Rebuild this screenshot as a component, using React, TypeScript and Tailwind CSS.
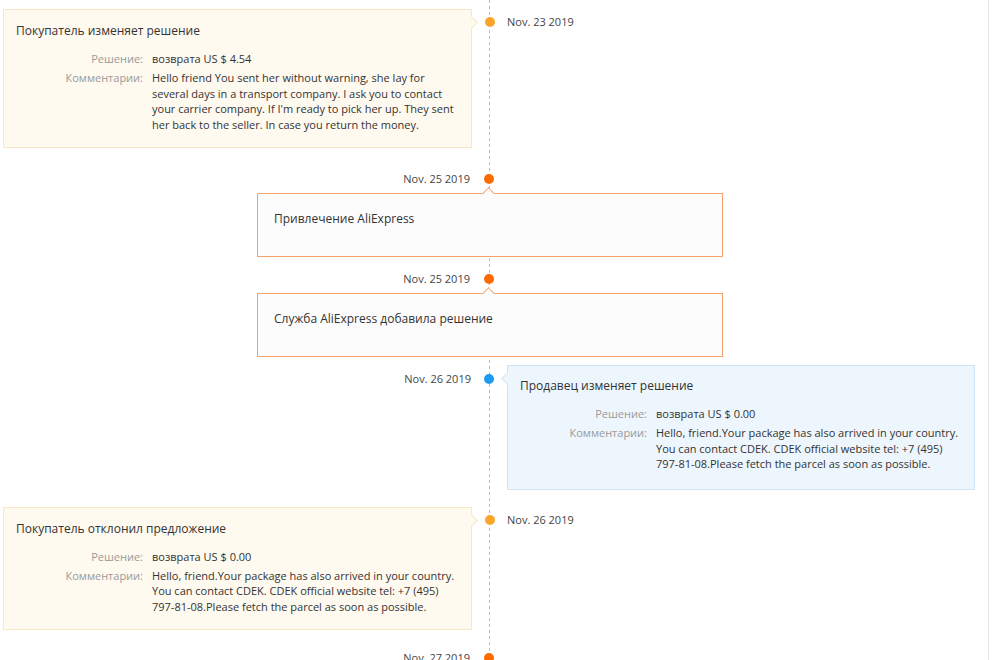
import React from "react";

const font = { fontFamily: '"Open Sans", "Noto Sans", Arial, sans-serif' };

function Dot({ color }: { color: string }) {
  return <div className={`w-[10px] h-[10px] rounded-full ${color}`} />;
}

function Details({ amount, lines }: { amount: string; lines: string[] }) {
  return (
    <div className="mt-[12px] text-[11px] leading-[15.5px]">
      <div className="flex">
        <div className="w-[136px] text-right text-[#999] pr-[9px] shrink-0">Решение:</div>
        <div className="text-[#333]">возврата US $ {amount}</div>
      </div>
      <div className="flex mt-[3.5px]">
        <div className="w-[136px] text-right text-[#999] pr-[9px] shrink-0">Комментарии:</div>
        <div className="text-[#333]">
          {lines.map((l, i) => (
            <div key={i} className="whitespace-nowrap">{l}</div>
          ))}
        </div>
      </div>
    </div>
  );
}

function LeftCard({
  title,
  amount,
  lines,
  date,
  dotColor,
  mt,
}: {
  title: string;
  amount: string;
  lines: string[];
  date: string;
  dotColor: string;
  mt: string;
}) {
  return (
    <div className={`flex items-start ${mt}`}>
      <div className="ml-[3px] w-[469px] relative bg-[#fffaf0] border border-[#f8e6c6] pl-[12px] pt-[13px] pb-[15px] shrink-0">
        <div className="text-[12px] leading-[16px] text-[#333]">{title}</div>
        <Details amount={amount} lines={lines} />
        <div className="absolute right-[-5px] top-[8px] w-[9px] h-[9px] rotate-45 bg-[#fffaf0] border-t border-r border-[#f8e6c6]" />
      </div>
      <div className="w-[35px] flex justify-center pt-[8px] shrink-0">
        <Dot color={dotColor} />
      </div>
      <div className="pt-[5px] text-[11px] leading-[16px] text-[#444]">{date}</div>
    </div>
  );
}

function CenterItem({ date, text, mt }: { date: string; text: string; mt: string }) {
  return (
    <div className={mt}>
      <div className="flex items-center h-[20px]">
        <div className="w-[471px] text-right text-[11px] text-[#444] pr-[1px]">{date}</div>
        <div className="w-[36px] flex justify-center">
          <Dot color="bg-[#ff6a00]" />
        </div>
      </div>
      <div className="ml-[257px] mt-[4px] w-[466px] h-[64px] relative bg-[#fcfcfc] border border-[#f3a26c] pl-[16px] pt-[17px]">
        <div className="text-[12px] leading-[16px] text-[#333]">{text}</div>
        <div className="absolute left-[226px] top-[-5px] w-[9px] h-[9px] rotate-45 bg-[#fcfcfc] border-t border-l border-[#f3a26c]" />
      </div>
    </div>
  );
}

export default function App() {
  return (
    <div style={font} className="w-[1000px] h-[660px] bg-white overflow-hidden">
      <div className="relative w-[989px] h-[660px] border-r border-[#e6e6e6]">
        <div className="absolute left-[489px] top-0 bottom-0 w-[1px] bg-[repeating-linear-gradient(to_bottom,#bdbdbd_0_3px,transparent_3px_6px)]" />
        <div className="relative flex flex-col">
          <LeftCard
            mt="mt-[9px]"
            title="Покупатель изменяет решение"
            amount="4.54"
            date="Nov. 23 2019"
            dotColor="bg-[#f9a52b]"
            lines={[
              "Hello friend You sent her without warning, she lay for",
              "several days in a transport company. I ask you to contact",
              "your carrier company. If I'm ready to pick her up. They sent",
              "her back to the seller. In case you return the money.",
            ]}
          />
          <CenterItem mt="mt-[21px]" date="Nov. 25 2019" text="Привлечение AliExpress" />
          <CenterItem mt="mt-[12px]" date="Nov. 25 2019" text="Служба AliExpress добавила решение" />

          <div className="flex items-start mt-[8px]">
            <div className="w-[471px] text-right text-[11px] leading-[16px] text-[#444] pt-[6px] shrink-0">Nov. 26 2019</div>
            <div className="w-[36px] flex justify-center pt-[9px] shrink-0">
              <Dot color="bg-[#1e9bf0]" />
            </div>
            <div className="w-[468px] relative bg-[#eef6fd] border border-[#cfe5f6] pl-[12px] pt-[12px] pb-[17px] shrink-0">
              <div className="text-[12px] leading-[16px] text-[#333]">Продавец изменяет решение</div>
              <Details
                amount="0.00"
                lines={[
                  "Hello, friend.Your package has also arrived in your country.",
                  "You can contact CDEK. CDEK official website tel: +7 (495)",
                  "797-81-08.Please fetch the parcel as soon as possible.",
                ]}
              />
              <div className="absolute left-[-5px] top-[8px] w-[9px] h-[9px] rotate-45 bg-[#eef6fd] border-b border-l border-[#cfe5f6]" />
            </div>
          </div>

          <LeftCard
            mt="mt-[17px]"
            title="Покупатель отклонил предложение"
            amount="0.00"
            date="Nov. 26 2019"
            dotColor="bg-[#f9a52b]"
            lines={[
              "Hello, friend.Your package has also arrived in your country.",
              "You can contact CDEK. CDEK official website tel: +7 (495)",
              "797-81-08.Please fetch the parcel as soon as possible.",
            ]}
          />

          <div className="flex items-center h-[20px] mt-[18px]">
            <div className="w-[471px] text-right text-[11px] text-[#444] pr-[1px]">Nov. 27 2019</div>
            <div className="w-[36px] flex justify-center">
              <Dot color="bg-[#ff6a00]" />
            </div>
          </div>
        </div>
      </div>
    </div>
  );
}
